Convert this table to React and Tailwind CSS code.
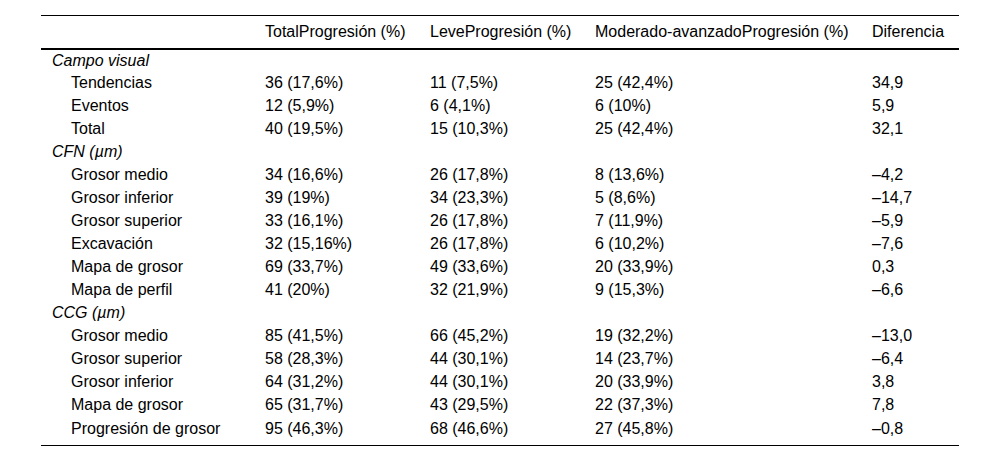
const rows = [
  { group: "Campo visual" },
  { label: "Tendencias", total: "36 (17,6%)", leve: "11 (7,5%)", mod: "25 (42,4%)", dif: "34,9" },
  { label: "Eventos", total: "12 (5,9%)", leve: "6 (4,1%)", mod: "6 (10%)", dif: "5,9" },
  { label: "Total", total: "40 (19,5%)", leve: "15 (10,3%)", mod: "25 (42,4%)", dif: "32,1" },
  { group: "CFN (µm)" },
  { label: "Grosor medio", total: "34 (16,6%)", leve: "26 (17,8%)", mod: "8 (13,6%)", dif: "\u20134,2" },
  { label: "Grosor inferior", total: "39 (19%)", leve: "34 (23,3%)", mod: "5 (8,6%)", dif: "\u201314,7" },
  { label: "Grosor superior", total: "33 (16,1%)", leve: "26 (17,8%)", mod: "7 (11,9%)", dif: "\u20135,9" },
  { label: "Excavación", total: "32 (15,16%)", leve: "26 (17,8%)", mod: "6 (10,2%)", dif: "\u20137,6" },
  { label: "Mapa de grosor", total: "69 (33,7%)", leve: "49 (33,6%)", mod: "20 (33,9%)", dif: "0,3" },
  { label: "Mapa de perfil", total: "41 (20%)", leve: "32 (21,9%)", mod: "9 (15,3%)", dif: "\u20136,6" },
  { group: "CCG (µm)" },
  { label: "Grosor medio", total: "85 (41,5%)", leve: "66 (45,2%)", mod: "19 (32,2%)", dif: "\u201313,0" },
  { label: "Grosor superior", total: "58 (28,3%)", leve: "44 (30,1%)", mod: "14 (23,7%)", dif: "\u20136,4" },
  { label: "Grosor inferior", total: "64 (31,2%)", leve: "44 (30,1%)", mod: "20 (33,9%)", dif: "3,8" },
  { label: "Mapa de grosor", total: "65 (31,7%)", leve: "43 (29,5%)", mod: "22 (37,3%)", dif: "7,8" },
  { label: "Progresión de grosor", total: "95 (46,3%)", leve: "68 (46,6%)", mod: "27 (45,8%)", dif: "\u20130,8" },
]

export default function App() {
  return (
    <div className="w-[1000px] h-[461px] bg-white pt-[15px] pl-[41px] font-['Liberation_Sans',Arial,sans-serif] text-[16px] leading-[18px] text-black">
      <table className="w-[918px] border-collapse table-fixed whitespace-nowrap">
        <colgroup>
          <col className="w-[212px]" />
          <col className="w-[165px]" />
          <col className="w-[165px]" />
          <col className="w-[277px]" />
          <col className="w-[99px]" />
        </colgroup>
        <thead>
          <tr className="h-[33px] border-t border-black border-b-2">
            <th className="p-0 pl-[11px] text-left font-normal"></th>
            <th className="p-0 pl-[12px] text-left font-normal">TotalProgresión (%)</th>
            <th className="p-0 pl-[12px] text-left font-normal">LeveProgresión (%)</th>
            <th className="p-0 pl-[12px] text-left font-normal">Moderado-avanzadoProgresión (%)</th>
            <th className="p-0 pl-[12px] text-left font-normal">Diferencia</th>
          </tr>
        </thead>
        <tbody className="border-b border-black">
          {rows.map((r, i) =>
            r.group ? (
              <tr key={i} className="h-[23px]">
                <td colSpan={5} className="p-0 pl-[11px] italic">{r.group}</td>
              </tr>
            ) : (
              <tr key={i} className={i === rows.length - 1 ? "h-[29px] align-top" : "h-[23px]"}>
                <td className={`p-0 pl-[30px] ${i === rows.length - 1 ? "pt-[3px]" : ""}`}>{r.label}</td>
                <td className={`p-0 pl-[12px] ${i === rows.length - 1 ? "pt-[3px]" : ""}`}>{r.total}</td>
                <td className={`p-0 pl-[12px] ${i === rows.length - 1 ? "pt-[3px]" : ""}`}>{r.leve}</td>
                <td className={`p-0 pl-[12px] ${i === rows.length - 1 ? "pt-[3px]" : ""}`}>{r.mod}</td>
                <td className={`p-0 pl-[12px] ${i === rows.length - 1 ? "pt-[3px]" : ""}`}>{r.dif}</td>
              </tr>
            )
          )}
        </tbody>
      </table>
    </div>
  )
}
